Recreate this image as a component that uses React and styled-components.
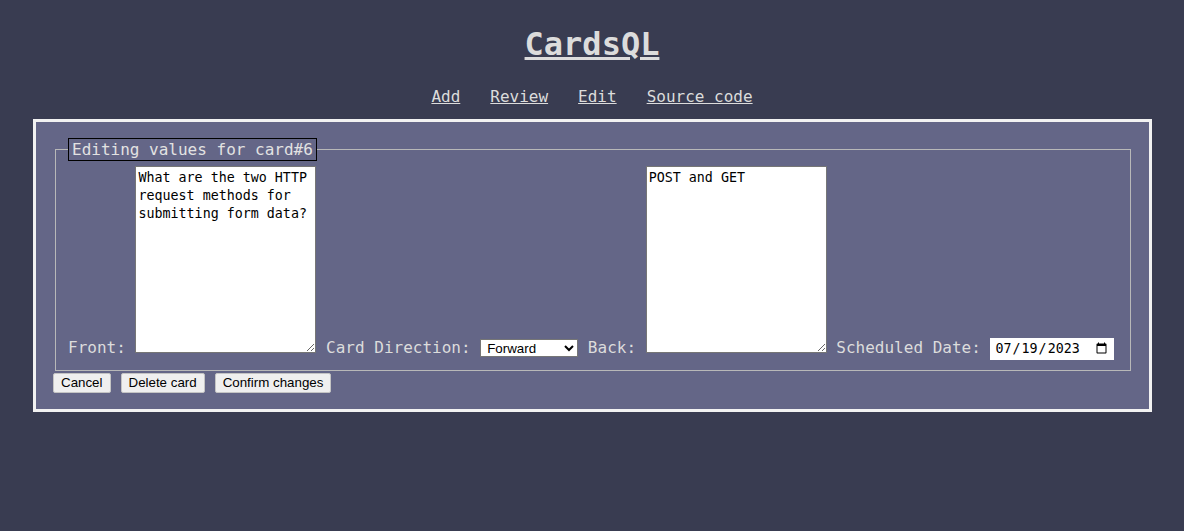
import React from 'react'
import styled, { createGlobalStyle } from 'styled-components'

const GlobalStyle = createGlobalStyle`
    body {
        margin: 8px;
        background-color: #393c51;
        color: #dcdcdc;
        font-family: "DejaVu Sans Mono", "Liberation Mono", monospace;
        font-size: 16px;
    }
`

function App() {
    return (
        <>
            <GlobalStyle />
            <Title><a href="#">CardsQL</a></Title>
            <Nav>
                <NavLink href="#">Add</NavLink>
                <NavLink href="#">Review</NavLink>
                <NavLink href="#">Edit</NavLink>
                <NavLink href="#">Source code</NavLink>
            </Nav>
            <Panel>
                <form onSubmit={e => e.preventDefault()}>
                    <Fieldset>
                        <Legend>Editing values for card#6</Legend>
                        <Label htmlFor="front">Front:</Label>{' '}
                        <TextArea
                            id="front"
                            defaultValue="What are the two HTTP request methods for submitting form data?"
                        />{' '}
                        <Label htmlFor="direction">Card Direction:</Label>{' '}
                        <Select id="direction" defaultValue="forward">
                            <option value="forward">Forward</option>
                            <option value="backward">Backward</option>
                        </Select>{' '}
                        <Label htmlFor="back">Back:</Label>{' '}
                        <TextArea id="back" defaultValue="POST and GET" />{' '}
                        <Label htmlFor="date">Scheduled Date:</Label>{' '}
                        <DateInput id="date" type="date" defaultValue="2023-07-19" />
                    </Fieldset>
                    <Buttons>
                        <Button type="button">Cancel</Button>
                        <Button type="button">Delete card</Button>
                        <Button type="submit">Confirm changes</Button>
                    </Buttons>
                </form>
            </Panel>
        </>
    )
}

export default App

const Title = styled.h1`
    text-align: center;
    font-size: 32px;
    line-height: 42px;
    margin: 15px 0 0;

    a {
        color: #dcdcdc;
    }
`
const Nav = styled.nav`
    display: flex;
    justify-content: center;
    gap: 30px;
    margin-top: 21px;
    line-height: 21px;
`
const NavLink = styled.a`
    color: #dcdcdc;
    text-decoration: underline;
`
const Panel = styled.div`
    margin: 12px 24px 0 25px;
    padding: 16px 16px 16px 17px;
    background-color: #646687;
    border: 3px solid #f2f2f2;
`
const Fieldset = styled.fieldset`
    margin: 0 2px;
    padding: 5px 12px 10px;
    border: 1px solid #b8b8b8;
    line-height: 21px;
`
const Legend = styled.legend`
    border: 1px solid #000;
    padding: 0 3px;
    color: #e2e2e2;
    line-height: 21px;
`
const Label = styled.label`
    color: #dcdcdc;
`
const TextArea = styled.textarea`
    box-sizing: border-box;
    width: 181px;
    height: 187px;
    padding: 2px;
    border: 1px solid #767676;
    background: #fff;
    color: #000;
    font-family: "DejaVu Sans Mono", "Liberation Mono", monospace;
    font-size: 13.33px;
    line-height: 18px;
    vertical-align: baseline;
`
const Select = styled.select`
    box-sizing: border-box;
    width: 98px;
    height: 18px;
    font-family: "Liberation Sans", Arial, sans-serif;
    font-size: 13.33px;
    background: #fff;
    color: #000;
    border: 1px solid #767676;
    padding: 0 2px;
`
const DateInput = styled.input`
    box-sizing: border-box;
    width: 124px;
    height: 22px;
    border: none;
    padding: 1px 4px;
    background: #fff;
    color: #000;
    font-family: "DejaVu Sans Mono", "Liberation Mono", monospace;
    font-size: 13.33px;
`
const Buttons = styled.div`
    display: flex;
    gap: 10px;
    margin-top: 2px;
`
const Button = styled.button`
    font-family: "Liberation Sans", Arial, sans-serif;
    font-size: 13.33px;
    padding: 1px 7px;
    height: 20px;
    background: #efefef;
    color: #000;
    border: 1px solid #c4c4c4;
    border-radius: 2px;
`
